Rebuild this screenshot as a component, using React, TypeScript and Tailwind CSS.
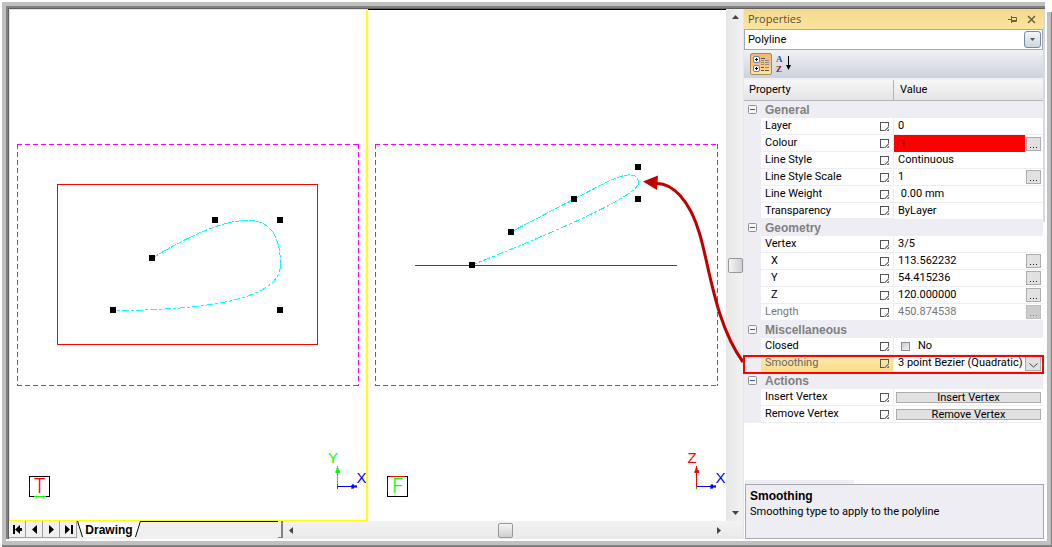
import type { ReactNode } from "react";

type Prop = {
  name: string;
  value?: string;
  kind?: "text" | "colour" | "check" | "select" | "action";
  more?: boolean;
  indent?: boolean;
  disabled?: boolean;
  short?: boolean;
};

const groups: { title: string; rows: Prop[] }[] = [
  {
    title: "General",
    rows: [
      { name: "Layer", value: "0" },
      { name: "Colour", value: "1", kind: "colour", more: true },
      { name: "Line Style", value: "Continuous" },
      { name: "Line Style Scale", value: "1", more: true },
      { name: "Line Weight", value: " 0.00 mm" },
      { name: "Transparency", value: "ByLayer", short: true },
    ],
  },
  {
    title: "Geometry",
    rows: [
      { name: "Vertex", value: "3/5" },
      { name: "X", value: "113.562232", more: true, indent: true },
      { name: "Y", value: "54.415236", more: true, indent: true },
      { name: "Z", value: "120.000000", more: true, indent: true },
      { name: "Length", value: "450.874538", more: true, disabled: true },
    ],
  },
  {
    title: "Miscellaneous",
    rows: [
      { name: "Closed", value: "No", kind: "check" },
      { name: "Smoothing", value: "3 point Bezier (Quadratic)", kind: "select" },
    ],
  },
  {
    title: "Actions",
    rows: [
      { name: "Insert Vertex", kind: "action" },
      { name: "Remove Vertex", kind: "action" },
    ],
  },
];

function Handles({ points }: { points: [number, number][] }) {
  return (
    <g fill="#000">
      {points.map(([x, y]) => (
        <rect key={`${x}-${y}`} x={x - 3} y={y - 3} width="6" height="6" />
      ))}
    </g>
  );
}

function Axes({ x, up, upColor }: { x: number; up: string; upColor: string }) {
  return (
    <g fontFamily="Liberation Sans, sans-serif" fontSize="15">
      <path d={`M${x + 0.5} 486V467`} stroke={upColor} />
      <path d={`M${x + 0.5} 466l1.5 5.500h-3zM${x - 1.500} 470.500h4v2h-4z`} fill={upColor} stroke={upColor} strokeWidth="0.6" />
      <path d={`M${x} 486.500h20`} stroke="#00f" />
      <path d={`M${x + 20} 486.500l-5.500 2v-4z`} fill="#00f" stroke="#00f" strokeWidth="0.6" />
      <path d={`M${x + 0.5} 484v5`} stroke={upColor === "#f00" ? "#0c0" : "#f00"} />
      <path d={`M${x + 0.5} 484v3`} stroke="#f00" />
      <text x={x - 4} y="463" textAnchor="middle" fill={upColor}>{up}</text>
      <text x={x + 24.500} y="483" textAnchor="middle" fill="#00f">X</text>
    </g>
  );
}

function TopView() {
  return (
    <svg className="block h-full w-full" viewBox="10 10 356 510" shapeRendering="crispEdges" fill="none" role="img" aria-label="Top view">
      <path d="M17 144.500H359M17 385.500H359" stroke="#f0f" strokeDasharray="5 3" />
      <path d="M17.500 144V386M358.500 144V386" stroke="#f0f" strokeDasharray="5 3" />
      <rect x="57.500" y="184.500" width="260" height="160" stroke="#f00" />
      <path d="M152.500 258Q215 220 247.500 220.500Q280.500 220 280.500 265" stroke="#0ff" strokeDasharray="6 1" />
      <path d="M280.500 265Q280 310 113 310.500" stroke="#0ff" strokeDasharray="7 2 3 2" />
      <Handles points={[[152, 258], [215, 220], [280, 220], [280, 310], [113, 310]]} />
      <rect x="29.500" y="476.500" width="20" height="20" stroke="#000" />
      <path d="M29.500 481v10" stroke="#00f" />
      <path d="M34 496.500h12" stroke="#0f0" />
      <text x="39.500" y="493" textAnchor="middle" fill="#f00" fontFamily="Inter, Roboto, sans-serif" fontWeight="300" fontSize="20">T</text>
      <Axes x={337} up="Y" upColor="#0f0" />
    </svg>
  );
}

function FrontView() {
  return (
    <svg className="relative z-10 block h-full w-full overflow-visible" viewBox="368 10 358 511" fill="none" role="img" aria-label="Front view">
      <g shapeRendering="crispEdges">
        <path d="M375 144.500H718M375 385.500H718" stroke="#f0f" strokeDasharray="5 3" />
        <path d="M375.500 144V386M717.500 144V386" stroke="#f0f" strokeDasharray="5 3" />
        <path d="M415 265.500H677" stroke="#f00000" />
        <path d="M511 232Q574 199 606 182.500Q638 167 638.500 183" stroke="#0ff" strokeDasharray="6 1" />
        <path d="M638.500 183Q638 199 472 265" stroke="#0ff" strokeDasharray="7 2 3 2" />
        <Handles points={[[511, 232], [574, 199], [638, 167], [638, 199], [472, 265]]} />
        <rect x="387.500" y="476.500" width="20" height="20" stroke="#000" />
        <path d="M387.500 478v14" stroke="#00f" />
        <path d="M390 476.500h15" stroke="#f00" />
        <text x="398" y="493" textAnchor="middle" fill="#0f0" fontFamily="Inter, Roboto, sans-serif" fontWeight="300" fontSize="20">F</text>
        <Axes x={696} up="Z" upColor="#f00" />
      </g>
      <path d="M655 183.500C672 182 690 200 700 235C710 270 716 325 743 362" stroke="#c00000" strokeWidth="3" />
      <path d="M643 181.500L658 175.500L657 190Z" fill="#c00000" />
    </svg>
  );
}

function NavButton({ label, children }: { label: string; children: ReactNode }) {
  return (
    <button aria-label={label} className="flex w-[17px] items-center justify-center border-r border-b border-[#a0a0a0] bg-[#f0f0f0]">
      <svg width="13" height="11" viewBox="0 0 13 11" fill="#000">{children}</svg>
    </button>
  );
}

function Marker() {
  return (
    <svg className="block shrink-0" width="9" height="9" viewBox="0 0 9 9" fill="none" shapeRendering="crispEdges">
      <path d="M8.500 5V.500H.500v8H5" stroke="#555" />
      <path d="M4 8.500h1v-1h1v-1h1v-1h1v-1h1" stroke="#888" />
      <path d="M9 6v3H6z" fill="#777" />
    </svg>
  );
}

function MoreButton({ name, disabled }: { name: string; disabled?: boolean }) {
  return (
    <button
      aria-label={`Edit ${name}`}
      disabled={disabled}
      className={`mr-0.5 flex h-3.5 w-[15px] shrink-0 items-end justify-center border pb-[2px] ${disabled ? "border-[#bfbfbf] bg-[#ccc]" : "border-[#adadad] bg-[#e1e1e1]"}`}
    >
      <svg width="7" height="1" viewBox="0 0 7 1" fill={disabled ? "#888" : "#222"}>
        <path d="M0 0h1v1H0zM3 0h1v1H3zM6 0h1v1H6z" />
      </svg>
    </button>
  );
}

function Value({ row, id }: { row: Prop; id: string }) {
  if (row.kind === "action") {
    return (
      <button id={id} className="mx-0.5 flex h-[11px] flex-1 items-center justify-center border border-[#adadad] bg-[#e1e1e1] leading-none">
        {row.name}
      </button>
    );
  }
  if (row.kind === "check") {
    return (
      <label className="flex items-center gap-2 pl-[7px]">
        <input id={id} type="checkbox" className="h-[9px] w-[9px] appearance-none border border-[#8e8f8f] bg-[linear-gradient(135deg,#c3c9d3,#f6f6f6)]" />
        No
      </label>
    );
  }
  if (row.kind === "select") {
    return (
      <span className="relative flex h-full min-w-0 flex-1 items-center">
        <select id={id} className="h-4 w-full min-w-0 appearance-none bg-white pl-1 leading-4">
          <option>{row.value}</option>
        </select>
        <span className="pointer-events-none absolute right-0.5 flex h-[15px] w-4 items-center justify-center border border-[#adadad] bg-[#e1e1e1]">
          <svg className="mt-1" width="9" height="5" viewBox="0 0 9 5" fill="none"><path d="M.500 .500l4 3.500l4-3.500" stroke="#444" /></svg>
        </span>
      </span>
    );
  }
  return (
    <>
      <input
        id={id}
        defaultValue={row.value}
        disabled={row.disabled}
        className={`min-w-0 flex-1 leading-4 outline-none ${row.kind === "colour" ? "mr-px h-[17px] bg-[#f00] pl-1.5 text-[#500]" : "h-4 bg-white pl-1"} ${row.disabled ? "text-[#777]" : ""}`}
      />
      {row.more && <MoreButton name={row.name} disabled={row.disabled} />}
    </>
  );
}

function PropertyRow({ row }: { row: Prop }) {
  const id = `prop-${row.name.replace(/ /g, "-").toLowerCase()}`;
  const selected = row.kind === "select";
  const height = row.short ? "h-4" : "h-[17px]";
  return (
    <tr className="relative">
      <td className="bg-[#eeedf4] p-0">
        {selected && <span className="pointer-events-none absolute -left-px -right-px top-0 z-20 h-[19px] border-2 border-[#f00]" />}
      </td>
      <td className={`border-r border-[#eeedf4] p-0 ${selected ? "bg-linear-to-b from-[#ffebb5] to-[#fbd986] text-[#666]" : ""}`}>
        <div className={`flex items-center justify-between border-b border-[#eeedf4] pl-1 pr-1 ${height} ${row.disabled ? "text-[#777]" : ""}`}>
          <label htmlFor={id} className={row.indent ? "pl-1.5" : ""}>{row.name}</label>
          <Marker />
        </div>
      </td>
      <td className="p-0">
        <div className={`flex items-center ${row.kind === "colour" ? "" : "border-b border-[#eeedf4]"} ${height}`}>
          <Value row={row} id={id} />
        </div>
      </td>
    </tr>
  );
}

function PropertiesPanel() {
  return (
    <aside className="flex w-[302px] shrink-0 flex-col border-l border-[#e4e4ec] bg-white font-['Roboto','Liberation_Sans',sans-serif] text-[11px] leading-4 text-black">
      <div className="bg-[linear-gradient(#d6dae6_213px,#fff_213px)] pr-0.5">
        <header className="flex h-5 items-center justify-between bg-linear-to-b from-[#f1d98d] to-[#fde5a0] pl-1 pr-[7px] font-['Open_Sans',sans-serif] text-[11px] text-[#594f38]">
          <h1>Properties</h1>
          <div className="flex items-center gap-2.5">
            <button aria-label="Auto hide">
              <svg className="block" width="9" height="9" viewBox="0 0 9 9" fill="none" stroke="#6c6040">
                <path d="M0 4.500h3M3.500 1v7M4 2.500h4.500v4H4M4 5.500h4" />
              </svg>
            </button>
            <button aria-label="Close">
              <svg className="block" width="9" height="9" viewBox="0 0 9 9" fill="none" stroke="#6c6040" strokeWidth="1.500">
                <path d="M1 1l7 7M8 1L1 8" />
              </svg>
            </button>
          </div>
        </header>
        <div className="relative flex h-[21px] items-center border border-[#a5a8b0] bg-white">
          <select aria-label="Object type" className="h-full w-full appearance-none bg-white pl-[3px]">
            <option>Polyline</option>
          </select>
          <span className="pointer-events-none absolute right-px top-px flex h-[17px] w-[17px] items-center justify-center rounded-[3px] border border-[#7b8a99] bg-linear-to-b from-[#f4f6f8] to-[#cbd7e0]">
            <svg width="5" height="3" viewBox="0 0 5 3"><path d="M0 0h5L2.500 3z" fill="#555" /></svg>
          </span>
        </div>
        <div className="flex h-[30px] items-start gap-1 border-b-2 border-[#f0f0f4] bg-linear-to-b from-[#f0f1f5] to-[#ccd2dc] pl-1.5 pt-[3px]">
          <button aria-label="Categorised" aria-pressed="true" className="flex h-[22px] w-[22px] items-center justify-center rounded-[2px] border border-[#a58c5c] bg-linear-to-b from-[#f5b873] via-[#fcc06e] to-[#fee9a4]">
            <svg width="18" height="18" viewBox="0 0 18 18" fill="none">
              <rect x="1.500" y="1.500" width="6" height="6" rx="1.500" fill="#fff" stroke="#5b86b8" />
              <rect x="1.500" y="10.500" width="6" height="6" rx="1.500" fill="#fff" stroke="#5b86b8" />
              <path d="M3 4.500h3M4.500 3v3M3 13.500h3M4.500 12v3" stroke="#000" />
              <path d="M9 3.500h4M9 12.500h3M9 15.500h3M13 15.500h4" stroke="#555" />
              <path d="M9 5.500h3M13 5.500h4M9 7.500h3M13 7.500h4M9 9.500h3M13 9.500h4M13 12.500h4" stroke="#8a8a9c" />
            </svg>
          </button>
          <button aria-label="Alphabetical">
            <svg className="block" width="16" height="20" viewBox="0 0 16 20" fontFamily="Liberation Serif, serif" fontWeight="700" fontSize="9">
              <text x="0" y="9" fill="#2c4f9e">A</text>
              <text x="0" y="19" fill="#8b1a2b">Z</text>
              <path d="M12 3h1v11h-1z" />
              <path d="M10 12h5l-2.500 5z" />
            </svg>
          </button>
        </div>
        <table className="w-full table-fixed border-separate border-spacing-0">
          <colgroup>
            <col className="w-[17px]" />
            <col className="w-[133px]" />
            <col />
          </colgroup>
          <thead>
            <tr className="bg-linear-to-b from-[#f7f7f8] to-[#e3e3e5] text-left">
              <th colSpan={2} className="h-[21px] border-r border-b border-[#b5b5b9] p-0 pl-[5px] font-normal">Property</th>
              <th className="h-[21px] border-b border-[#b5b5b9] p-0 pl-1.5 font-normal">Value</th>
            </tr>
          </thead>
          {groups.map((group) => (
            <tbody key={group.title} className="bg-white">
              <tr className="bg-[#eeedf4]">
                <td className="p-0">
                  <button aria-label={`Collapse ${group.title}`} className="ml-1 block">
                    <svg className="block" width="9" height="9" viewBox="0 0 9 9" fill="none">
                      <rect x=".500" y=".500" width="8" height="8" rx="1" fill="#f8f8f8" stroke="#919191" />
                      <path d="M2 4.500h5" stroke="#3c57a8" />
                    </svg>
                  </button>
                </td>
                <th colSpan={2} className="h-[17px] p-0 pl-1 text-left font-['Liberation_Sans',sans-serif] text-[12px] leading-4 font-bold text-[#808080]">
                  {group.title}
                </th>
              </tr>
              {group.rows.map((row) => (
                <PropertyRow key={row.name} row={row} />
              ))}
            </tbody>
          ))}
        </table>
      </div>
      <section className="mt-auto ml-px mr-px">
        <div className="h-1 w-[109px] bg-[#eeedf4]" />
        <div className="h-[55px] border border-[#a8a8b0] bg-[#eeedf4] px-1 pt-[3px]">
          <h2 className="font-['Liberation_Sans',sans-serif] text-[12px] leading-4 font-bold">Smoothing</h2>
          <p className="leading-[15px]">Smoothing type to apply to the polyline</p>
        </div>
      </section>
    </aside>
  );
}

export default function App() {
  return (
    <div className="relative flex min-h-screen bg-white pl-0.5 pt-0.5">
      <div className="flex flex-1 border-r border-b-2 border-[#808080]">
        <div className="flex flex-1 border-4 border-[#c0c0c0] pb-0.5 pr-0.5">
          <div className="flex flex-1 border-l-2 border-t-2 border-[#808080]">
            <div className="flex flex-1 border-l border-t border-[#606060]">
              <main className="flex min-w-0 flex-1 flex-col">
                <div className="flex flex-1">
                  <div className="min-w-0 flex-[356_1_0%] border border-r-2 border-[#ff0]">
                    <TopView />
                  </div>
                  <div className="min-w-0 flex-[358_1_0%] border-t border-black">
                    <FrontView />
                  </div>
                  <div className="flex w-[17px] shrink-0 flex-col items-center justify-between border-l border-[#e4e4e4] bg-linear-to-r from-[#e8e8e8] to-[#f1f1f1] py-1.5">
                    <svg width="7" height="4" viewBox="0 0 7 4"><path d="M0 4h7L3.500 0z" fill="#444" /></svg>
                    <button aria-label="Scroll vertically" className="h-[15px] w-[15px] rounded-[2px] border border-[#979797] bg-linear-to-r from-[#f5f5f5] to-[#cfcfd2]" />
                    <svg width="7" height="4" viewBox="0 0 7 4"><path d="M0 0h7L3.500 4z" fill="#444" /></svg>
                  </div>
                </div>
                <div className="flex h-[18px] shrink-0 bg-[#f0f0f0]">
                  <nav className="flex h-[17px] w-[274px] shrink-0">
                    <NavButton label="First sheet"><path d="M2 1h2v9H2zM9 1v9L4 5.500zM9 4h2v3H9z" /></NavButton>
                    <NavButton label="Previous sheet"><path d="M9 1v9L4 5.500z" /></NavButton>
                    <NavButton label="Next sheet"><path d="M4 1v9l5-4.500z" /></NavButton>
                    <NavButton label="Last sheet"><path d="M9 1h2v9H9zM3 1v9l5-4.500z" /></NavButton>
                    <a href="#drawing" className="relative flex w-[64px] items-center justify-center font-['Liberation_Sans',sans-serif] text-[12px] leading-4 font-bold text-black">
                      <svg className="absolute inset-0 h-full w-full" viewBox="0 0 64 17" fill="#fff">
                        <path d="M.500 0l5 16h54l5-16" />
                        <path d="M.500 0l5 16M58.500 16l5-16" stroke="#000" />
                      </svg>
                      <span className="relative">Drawing</span>
                    </a>
                    <div className="flex-1 border-t border-black" />
                    <div className="w-[5px] border-r-2 border-b border-[#808080] bg-[#f0f0f0]" />
                  </nav>
                  <div className="flex flex-1 items-center justify-between bg-linear-to-b from-[#f2f2f2] to-[#e9e9e9] pl-[6px] pr-[22px]">
                    <svg width="4" height="7" viewBox="0 0 4 7"><path d="M4 0v7L0 3.500z" fill="#444" /></svg>
                    <button aria-label="Scroll horizontally" className="h-[15px] w-[15px] rounded-[2px] border border-[#979797] bg-linear-to-b from-[#f5f5f5] to-[#cfcfd2]" />
                    <svg width="4" height="7" viewBox="0 0 4 7"><path d="M0 0v7l4-3.500z" fill="#444" /></svg>
                  </div>
                </div>
              </main>
              <PropertiesPanel />
            </div>
          </div>
        </div>
      </div>
      <div className="absolute right-0 top-0 h-3 w-[7px] bg-white" />
    </div>
  );
}
